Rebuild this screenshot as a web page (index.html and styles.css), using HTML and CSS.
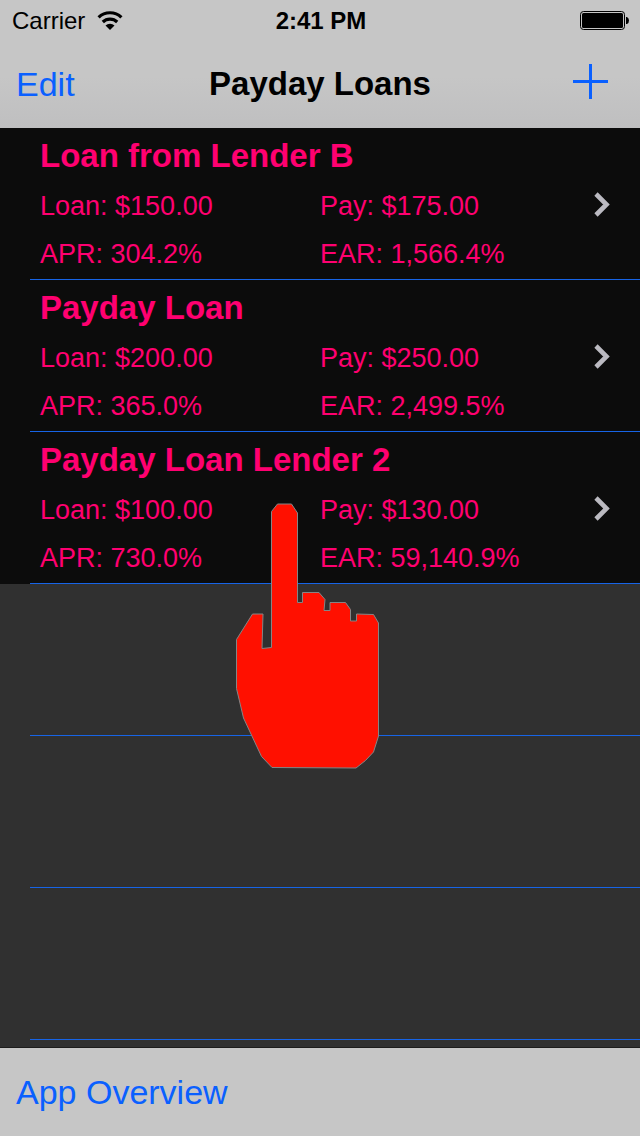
FILE: index.html
```
<!DOCTYPE html>
<html lang="en">
<head>
<meta charset="utf-8">
<title>Payday Loans</title>
<meta name="viewport" content="width=device-width">
<link rel="stylesheet" href="styles.css">
</head>
<body>
<header class="top">
  <div class="status">
    <div class="carrier">
      <span>Carrier</span>
      <svg class="wifi" width="26" height="20" viewBox="0 0 26 20" aria-hidden="true">
        <path d="M1.600 6.400a16.300 16.300 0 0 1 22.800 0M5.800 11a10.300 10.300 0 0 1 14.400 0" fill="none" stroke="#000" stroke-width="3.200"/>
        <path d="M8.500 14.500a6.500 6.500 0 0 1 9 0l-4.500 4.500z"/>
      </svg>
    </div>
    <time class="clock">2:41 PM</time>
    <svg class="battery" width="50" height="20" viewBox="0 0 50 20" aria-hidden="true">
      <rect x="0.500" y="0.500" width="44" height="18" rx="3" fill="none" stroke="#000"/>
      <rect x="2" y="2" width="41" height="15" rx="1.500"/>
      <path d="M46 6h1q2 1 2 3.500t-2 3.500h-1z"/>
    </svg>
  </div>
  <nav class="nav">
    <button class="link edit" type="button">Edit</button>
    <h1 class="heading">Payday Loans</h1>
    <button class="link add" type="button" aria-label="Add loan">
      <svg width="36" height="36" viewBox="0 0 36 36" aria-hidden="true"><path d="M0 17.500h35M17.500 0v35" stroke="#0a60ff" stroke-width="3" fill="none"/></svg>
    </button>
  </nav>
</header>
<main class="list">
  <a class="row" href="#">
    <span class="info">
      <strong class="name">Loan from Lender B</strong>
      <span class="cell">Loan: $150.00</span><span class="cell">Pay: $175.00</span>
      <span class="cell">APR: 304.2%</span><span class="cell">EAR: 1,566.4%</span>
    </span>
    <svg class="chevron" width="18" height="26" viewBox="0 0 18 26" aria-hidden="true"><path d="M2 3l10.500 10.500-10.500 10.500" fill="none" stroke="#bbbac1" stroke-width="4.600"/></svg>
  </a>
  <a class="row" href="#">
    <span class="info">
      <strong class="name">Payday Loan</strong>
      <span class="cell">Loan: $200.00</span><span class="cell">Pay: $250.00</span>
      <span class="cell">APR: 365.0%</span><span class="cell">EAR: 2,499.5%</span>
    </span>
    <svg class="chevron" width="18" height="26" viewBox="0 0 18 26" aria-hidden="true"><path d="M2 3l10.500 10.500-10.500 10.500" fill="none" stroke="#bbbac1" stroke-width="4.600"/></svg>
  </a>
  <a class="row" href="#">
    <span class="info">
      <strong class="name">Payday Loan Lender 2</strong>
      <span class="cell">Loan: $100.00</span><span class="cell">Pay: $130.00</span>
      <span class="cell">APR: 730.0%</span><span class="cell">EAR: 59,140.9%</span>
    </span>
    <svg class="chevron" width="18" height="26" viewBox="0 0 18 26" aria-hidden="true"><path d="M2 3l10.500 10.500-10.500 10.500" fill="none" stroke="#bbbac1" stroke-width="4.600"/></svg>
  </a>
  <div class="empty"></div>
  <div class="empty"></div>
  <div class="empty"></div>
  <svg class="hand" width="146" height="268" viewBox="234 502 146 268" aria-hidden="true">
    <path d="M271.500 511.500L277.500 504H291.500L297.500 513V602.500H302.500V592.500H319L325 599.500L324 610.500H330V602.500H345.500L350.500 609.500V621H356.500V614L373.500 614.500L378.500 623V736L373.500 752L365.500 760.500L356 768L272 767.500L261.500 756.500L243.500 718L236.500 688.500V639.500L252.500 614H263L262 648.500L271.500 647.500Z" fill="#ff1000" stroke="#858585"/>
  </svg>
</main>
<footer class="toolbar">
  <button class="link" type="button">App Overview</button>
</footer>
</body>
</html>
```

FILE: styles.css
```
:root {
  --separator: linear-gradient(#1764e6, #1764e6) 30px 100% / 100% 1px no-repeat;
}

* {
  box-sizing: border-box;
}

body {
  margin: 0;
  min-height: 100vh;
  display: flex;
  flex-direction: column;
  background: #303030;
  font-family: "Liberation Sans", Arial, sans-serif;
  color: #000;
}

.top {
  background: linear-gradient(#c6c6c6 60%, #bfbfc0);
}

.status {
  display: grid;
  grid-template-columns: 1fr auto 1fr;
  align-items: center;
  height: 40px;
  padding: 2px 10px 0 12px;
  font-size: 24px;
}

.carrier {
  display: flex;
  align-items: center;
  gap: 12px;
}

.clock {
  font-weight: bold;
}

.battery {
  justify-self: end;
}

.nav {
  display: grid;
  grid-template-columns: 1fr auto 1fr;
  align-items: center;
  height: 88px;
  padding: 0 16px;
}

.heading {
  margin: 0;
  font-size: 33px;
}

.link {
  padding: 0;
  border: 0;
  background: none;
  color: #0a60ff;
  font: inherit;
  font-size: 34px;
  cursor: pointer;
}

.edit {
  justify-self: start;
}

.add {
  justify-self: end;
  display: flex;
  padding: 0 15px 4px;
}

.list {
  position: relative;
  flex: 1;
}

.row {
  display: flex;
  align-items: center;
  height: 152px;
  padding: 0 28px 0 40px;
  background: var(--separator) #0c0c0c;
  color: #ff0070;
  text-decoration: none;
}

.info {
  flex: 1;
  display: grid;
  grid-template-columns: 280px 1fr;
  grid-template-rows: 56px 48px 48px;
}

.name {
  grid-column: 1 / -1;
  font-size: 33px;
  line-height: 56px;
}

.cell {
  font-size: 27px;
  line-height: 44px;
}

.empty {
  height: 152px;
  background: var(--separator);
}

.hand {
  position: absolute;
  left: 234px;
  top: 374px;
}

.toolbar {
  display: flex;
  align-items: center;
  height: 89px;
  padding: 0 16px;
  border-top: 1px solid #1c1c1c;
  background: #c6c6c6;
}
```
